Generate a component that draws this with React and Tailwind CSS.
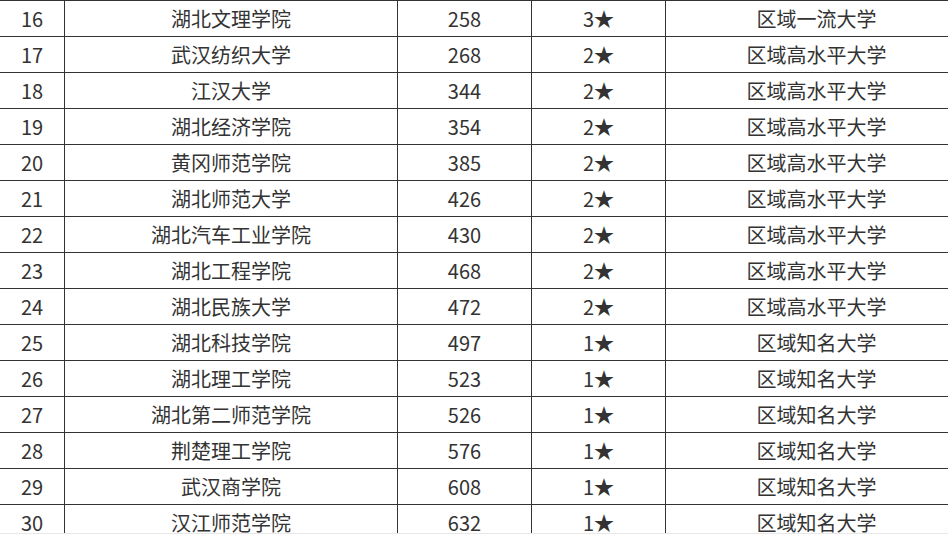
const rows = [
  ["16", "湖北文理学院", "258", "3★", "区域一流大学"],
  ["17", "武汉纺织大学", "268", "2★", "区域高水平大学"],
  ["18", "江汉大学", "344", "2★", "区域高水平大学"],
  ["19", "湖北经济学院", "354", "2★", "区域高水平大学"],
  ["20", "黄冈师范学院", "385", "2★", "区域高水平大学"],
  ["21", "湖北师范大学", "426", "2★", "区域高水平大学"],
  ["22", "湖北汽车工业学院", "430", "2★", "区域高水平大学"],
  ["23", "湖北工程学院", "468", "2★", "区域高水平大学"],
  ["24", "湖北民族大学", "472", "2★", "区域高水平大学"],
  ["25", "湖北科技学院", "497", "1★", "区域知名大学"],
  ["26", "湖北理工学院", "523", "1★", "区域知名大学"],
  ["27", "湖北第二师范学院", "526", "1★", "区域知名大学"],
  ["28", "荆楚理工学院", "576", "1★", "区域知名大学"],
  ["29", "武汉商学院", "608", "1★", "区域知名大学"],
  ["30", "汉江师范学院", "632", "1★", "区域知名大学"],
];

export default function App() {
  return (
    <div className="w-[948px] h-[535px] bg-white overflow-hidden">
      <div
        className="h-[533px] overflow-hidden text-[20px] text-[#333]"
        style={{ fontFamily: '"Noto Sans CJK SC", "Noto Sans", sans-serif' }}
      >
        {rows.map((r, i) => (
          <div key={i} className="flex h-[36px] border-t border-[#333] w-[967px]">
            <div className="w-[65px] shrink-0 border-r border-[#333] flex items-center justify-center">{r[0]}</div>
            <div className="w-[333px] shrink-0 border-r border-[#333] flex items-center justify-center">{r[1]}</div>
            <div className="w-[134px] shrink-0 border-r border-[#333] flex items-center justify-center">{r[2]}</div>
            <div className="w-[134px] shrink-0 border-r border-[#333] flex items-center justify-center">{r[3]}</div>
            <div className="w-[301px] shrink-0 flex items-center justify-center">{r[4]}</div>
          </div>
        ))}
      </div>
      <div className="h-px bg-[#e8e8e8]" />
    </div>
  );
}
